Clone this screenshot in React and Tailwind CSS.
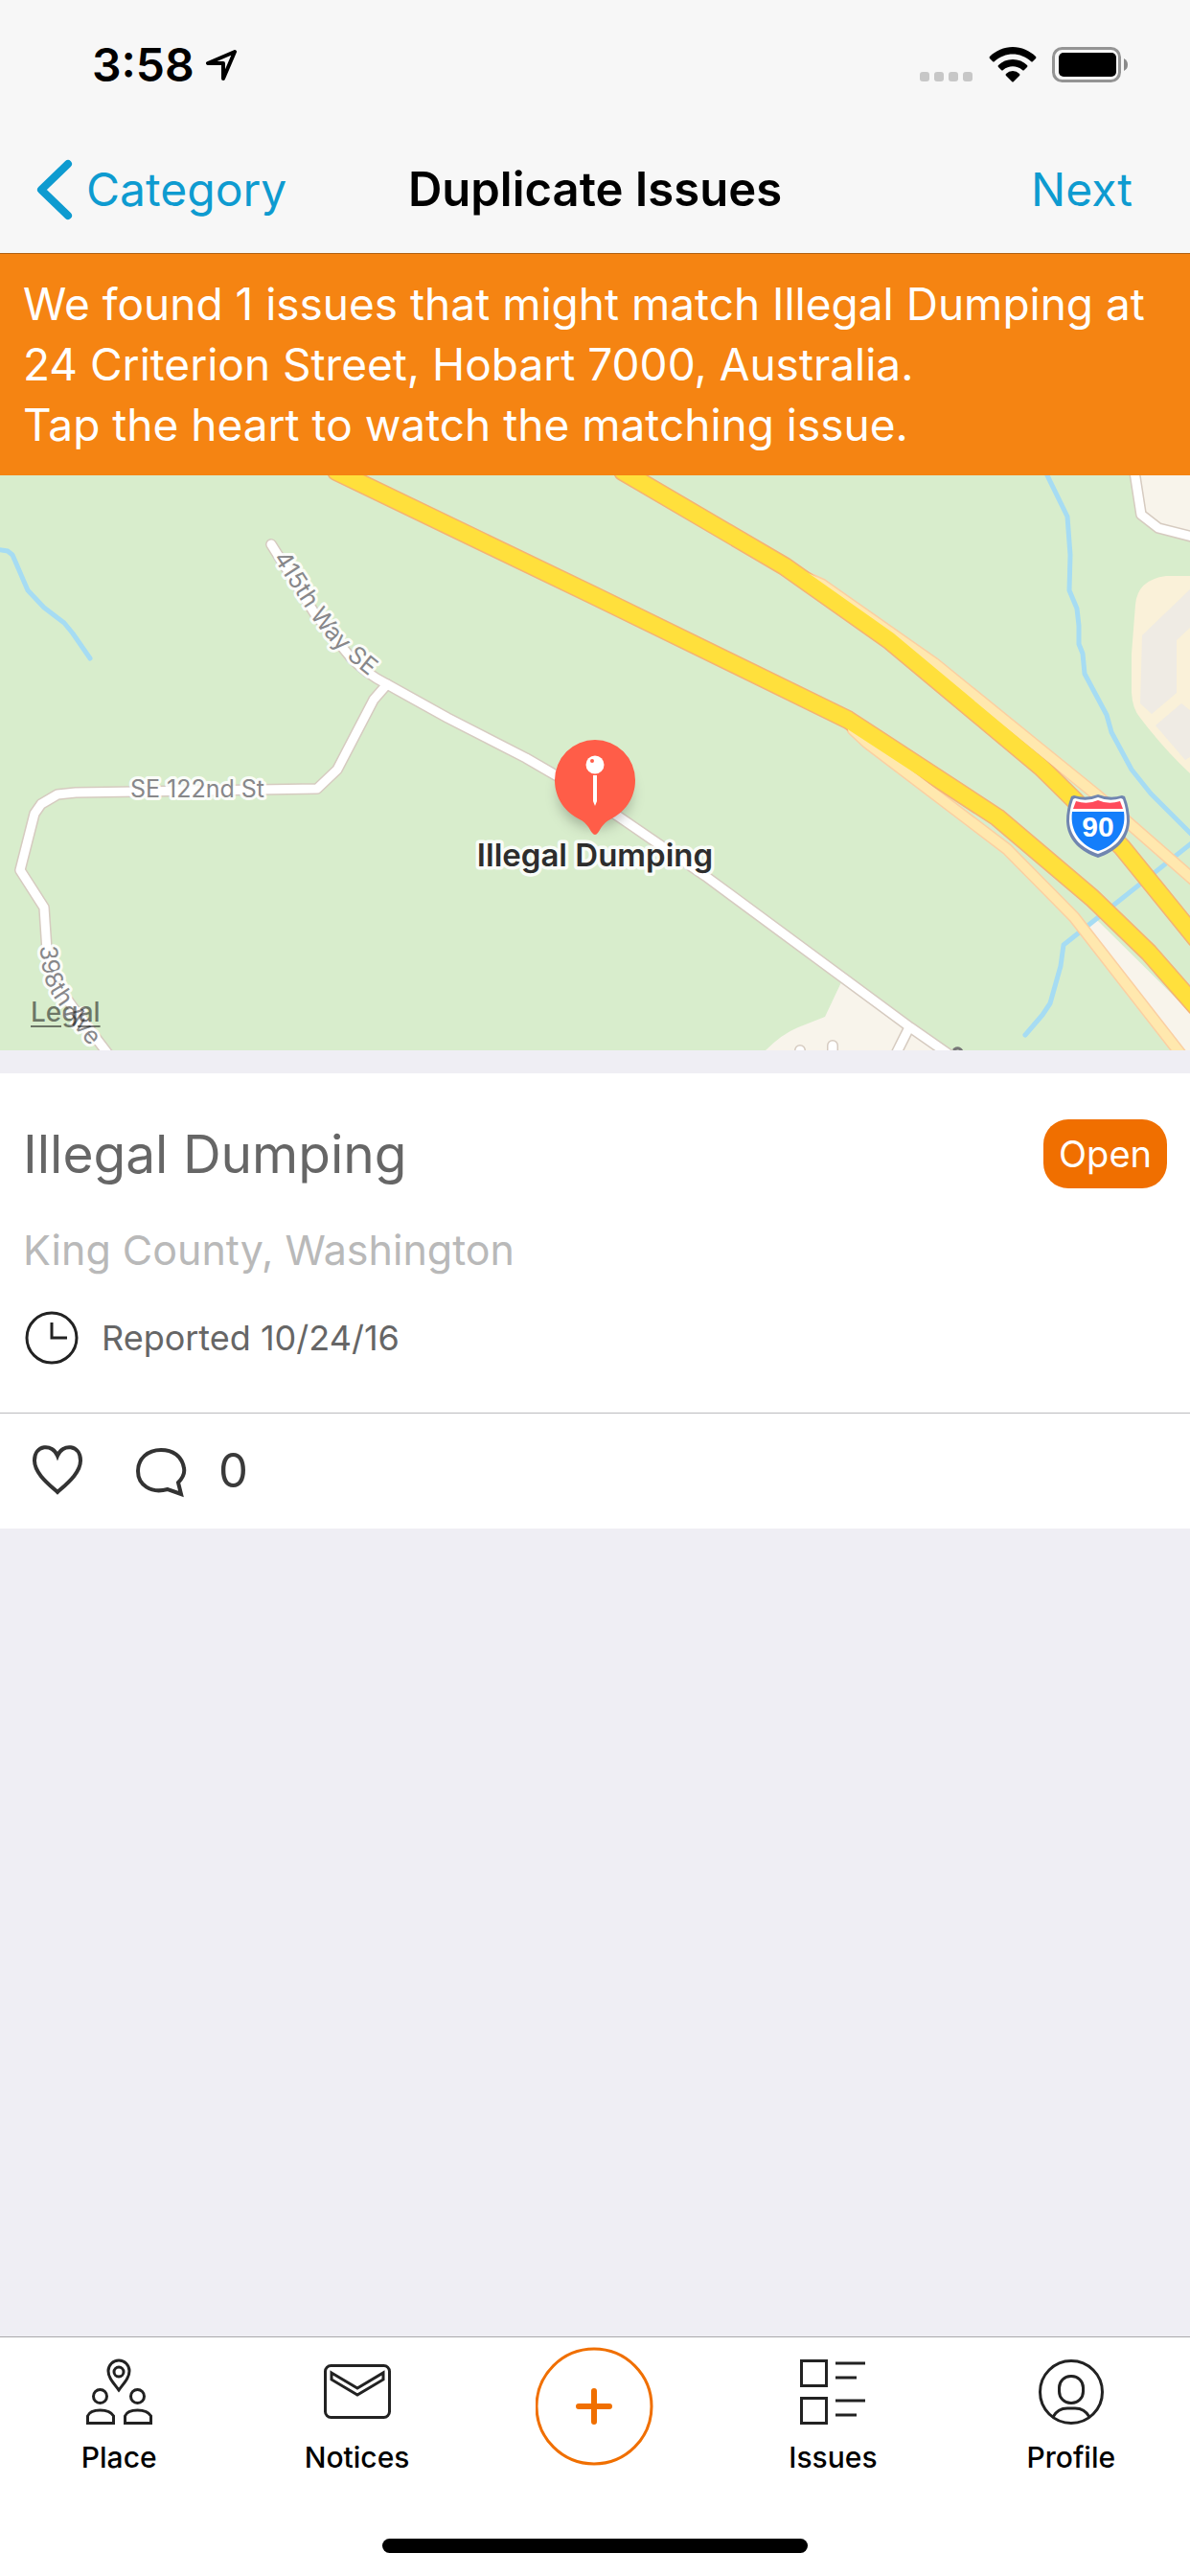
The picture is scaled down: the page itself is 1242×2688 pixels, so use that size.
// src/pages/issues/DuplicateIssues.jsx

const TABS = [
  { label: "Place", icon: PlaceIcon },
  { label: "Notices", icon: NoticesIcon },
  { label: "New issue", icon: null },
  { label: "Issues", icon: IssuesIcon },
  { label: "Profile", icon: ProfileIcon },
];

const ROADS = [
  "M283 72 L329 145 L366 190 Q382 207 404 218 L467 253 L549 295 L580 313 L647 357 L736 418 L950 576 L993 606",
  "M404 218 L390 234 L352 307 L331 327 L79 331 L60 333 L43 343 L36 353 L21 412 L46 451 L49 496 L63 537 L87 570 L113 604",
  "M948 578 L934 606",
  "M1184 -4 L1191 41 L1209 55 L1248 65",
  "M835 600 V610",
  "M869 595 V610",
];

const STREAMS = [
  "M-4 77 L8 79 L13 83 L29 120 L46 138 L67 154 L76 165 L94 191",
  "M1091 -4 L1114 43 L1117 83 L1116 120 L1124 139 L1126 157 L1126 176 L1130 186 L1132 207 L1155 250 L1160 268 L1181 307 L1201 332 L1246 377",
  "M1246 382 L1110 490 L1107 512 L1096 551 L1088 563 L1070 584",
];

const RAMPS = [
  "M838 105 L858 114 L975 196 L1144 333 L1248 424",
  "M890 265 L905 279 L1051 390 L1121 461 L1234 606",
];

const HIGHWAYS = [
  "M351 -4 L621 126 L885 255 L1041 357 L1140 441 L1199 498 L1248 554",
  "M650 -4 L819 95 L928 172 L1086 304 L1171 388 L1248 483",
];

function StatusBar() {
  return (
    <div className="flex items-start justify-between pt-9 pr-16 pl-24">
      <div className="flex items-center gap-3">
        <span className="text-5xl leading-16 font-semibold">3:58</span>
        <svg className="h-8 w-8" viewBox="0 0 32 32" fill="none" stroke="black" strokeWidth="4" strokeLinejoin="round">
          <path d="M30 2 L2 14 H18 V30 Z" />
        </svg>
      </div>
      <div className="flex pt-3">
        <svg className="mr-4 h-10 w-14" viewBox="0 0 56 40" fill="#c7c7c7">
          {[0, 15, 30, 45].map((x) => (
            <rect key={x} x={x} y="27" width="10" height="10" rx="3" />
          ))}
        </svg>
        <svg className="mr-4 h-10 w-[50px]" viewBox="0 0 50 40">
          <path d="M25 1 C34 1 43 5 49 11 Q50 12 49 13 L46 16 Q45 17 44 16 C33 6 17 6 6 16 Q5 17 4 16 L1 13 Q0 12 1 11 C7 5 16 1 25 1 Z" />
          <path d="M25 14 C31 14 36 16 40 20 Q41 21 40 22 L37 25 Q36 26 35 25 C29 20 21 20 15 25 Q14 26 13 25 L10 22 Q9 21 10 20 C14 16 19 14 25 14 Z" />
          <path d="M25 26 Q29 26 32 29 Q33 30 32 31 L26 37 Q25 38 24 37 L18 31 Q17 30 18 29 Q21 26 25 26 Z" />
        </svg>
        <svg className="h-10 w-20" viewBox="0 0 80 40">
          <rect x="1.5" y="2.5" width="69" height="34" rx="9" fill="none" stroke="#949494" strokeWidth="3" />
          <rect x="7" y="7" width="60" height="25" rx="5" />
          <path d="M75 13 Q79 15 79 19.500 T75 26 Z" fill="#8a8a8a" />
        </svg>
      </div>
    </div>
  );
}

function Header() {
  return (
    <header className="border-b border-[#b06012] bg-[#f7f7f7]">
      <StatusBar />
      <div className="grid grid-cols-[1fr_auto_1fr] items-center px-9 pt-[66px] pb-[34px]">
        <button className="flex items-center gap-3.5 text-[#0e9bd0]">
          <svg className="h-16 w-10" viewBox="0 0 40 64" fill="none" stroke="currentColor" strokeWidth="8" strokeLinecap="round" strokeLinejoin="round">
            <path d="M35 5 L7 32 L35 59" />
          </svg>
          <span className="text-5xl leading-16">Category</span>
        </button>
        <h1 className="text-[49px] leading-16 font-semibold">Duplicate Issues</h1>
        <button className="justify-self-end pr-6 text-5xl leading-16 text-[#0e9bd0]">Next</button>
      </div>
    </header>
  );
}

function RoadLabels() {
  return (
    <g fontSize="25" fill="#87878a" stroke="white" strokeOpacity="0.9" strokeWidth="6" strokeLinejoin="round" paintOrder="stroke">
      <path id="way-415" d="M285 86 L327 151 Q353 188 406 225" fill="none" stroke="none" />
      <path id="ave-398" d="M42 491 Q43 526 55 543 L76 574 L116 622" fill="none" stroke="none" />
      <text>
        <textPath href="#way-415">415th Way SE</textPath>
      </text>
      <text x="206" y="336" textAnchor="middle">SE 122nd St</text>
      <text>
        <textPath href="#ave-398">398th Ave</textPath>
      </text>
    </g>
  );
}

function InterstateShield() {
  return (
    <g>
      <path
        d="M1121 334 Q1133 338 1146 333 Q1159 338 1171 334 L1174 335 Q1179 348 1179 361 C1178 381 1164 393 1146 399 C1128 393 1114 381 1113 361 Q1113 348 1118 335 Z"
        fill="#7086b0"
      />
      <path
        d="M1122 337 Q1134 341 1146 336 Q1158 341 1170 337 L1172 338 Q1176 349 1176 361 C1175 379 1161 390 1146 395 C1131 390 1117 379 1116 361 Q1116 349 1120 338 Z"
        fill="white"
      />
      <path d="M1123 340 Q1135 344 1146 339 Q1157 344 1169 340 L1172 348 H1120 Z" fill="#ff4b5c" />
      <path d="M1119 351 H1173 C1176 372 1163 387 1146 392 C1129 387 1116 372 1119 351 Z" fill="#147efb" />
      <text x="1146" y="377" textAnchor="middle" fontSize="30" className="font-[Liberation_Sans] font-bold" fill="white">
        90
      </text>
    </g>
  );
}

function IssuePin() {
  return (
    <g>
      <ellipse cx="621" cy="332" rx="38" ry="36" fill="black" fillOpacity="0.25" filter="url(#pin-shadow)" />
      <path
        d="M621 276 A42 42 0 0 1 663 318 C663 338 651 352 637 359 C629 363 627 369 624 373 Q621 377 618 373 C615 369 613 363 605 359 C591 352 579 338 579 318 A42 42 0 0 1 621 276 Z"
        fill="#ff5d48"
      />
      <circle cx="621" cy="302" r="9.500" fill="white" />
      <circle cx="618" cy="298" r="2" fill="#ff5d48" />
      <path d="M619 313 H623 V340 L621 345 L619 340 Z" fill="white" />
      <text
        x="621"
        y="408"
        textAnchor="middle"
        fontSize="33"
        className="font-semibold"
        fill="#2d2d2d"
        stroke="white"
        strokeOpacity="0.85"
        strokeWidth="7"
        strokeLinejoin="round"
        paintOrder="stroke"
      >
        Illegal Dumping
      </text>
    </g>
  );
}

function IssueMap() {
  return (
    <section className="relative" aria-label="Map of matching issues">
      <svg className="block h-[600px] w-full bg-[#d8edcc]" viewBox="0 0 1242 600" preserveAspectRatio="xMidYMid slice">
        <defs>
          <filter id="pin-shadow" x="-50%" y="-50%" width="200%" height="200%">
            <feGaussianBlur stdDeviation="7" />
          </filter>
        </defs>

        {/* Built-up areas */}
        <path d="M799 600 Q816 583 833 576 L861 565 L878 529 L993 604 Z" fill="#f8f4eb" />
        <path d="M1184 0 L1191 41 L1209 55 L1242 63 V0 Z" fill="#f8f4eb" />
        <path d="M1144 463 L1242 560 V600 H1229 L1132 472 Z" fill="#f8f4eb" />
        <path d="M1242 105 H1217 Q1187 109 1185 135 L1181 186 V227 Q1182 244 1190 253 Q1215 286 1242 311 Z" fill="#faf1d9" />
        <path d="M1242 119 L1192 167 L1190 238 L1202 249 L1228 227 V172 L1242 159 Z" fill="#efebe4" />
        <path d="M1233 238 L1206 261 L1237 297 L1242 294 V245 Z" fill="#efebe4" />

        {/* Highway casings go below the ramps so that merging lanes have no line between them */}
        <g fill="none" strokeLinejoin="round" strokeLinecap="round">
          {STREAMS.map((d) => <path key={d} d={d} stroke="#a6dcf3" strokeWidth="5" />)}
          {ROADS.map((d) => <path key={d} d={d} stroke="#d6cbc0" strokeWidth="12" />)}
          {ROADS.map((d) => <path key={d} d={d} stroke="white" strokeWidth="9" />)}
          {RAMPS.map((d) => <path key={d} d={d} stroke="#fbcfa2" strokeWidth="13" />)}
          {HIGHWAYS.map((d) => <path key={d} d={d} stroke="#f5b273" strokeWidth="20" />)}
          {RAMPS.map((d) => <path key={d} d={d} stroke="#ffe8ae" strokeWidth="10" />)}
          {HIGHWAYS.map((d) => <path key={d} d={d} stroke="#ffe03c" strokeWidth="17" />)}
          <path d="M996 599 Q1001 596 1004 601" stroke="#777" strokeWidth="3" />
        </g>

        <RoadLabels />
        <InterstateShield />
        <IssuePin />
      </svg>
      <a href="#legal" className="absolute bottom-6 left-8 text-[28px] leading-8 font-medium text-black/50 underline underline-offset-4">
        Legal
      </a>
    </section>
  );
}

function IssueCard() {
  return (
    <article className="mt-6 bg-white">
      <div className="border-b border-[#bcbcbe] px-6 pt-12 pb-[50px]">
        <div className="flex items-center justify-between">
          <h2 className="text-[55px] leading-[72px] text-[#666]">Illegal Dumping</h2>
          <span className="rounded-[26px] bg-[#f06f00] px-4 text-[38px] leading-[72px] text-white">Open</span>
        </div>
        <p className="mt-9 text-[43px] leading-14 text-[#b9b9b9]">King County, Washington</p>
        <div className="mt-9 flex items-center gap-6 pl-0.5">
          <svg className="h-14 w-14" viewBox="0 0 56 56" fill="none" stroke="#222" strokeWidth="3">
            <circle cx="28" cy="28" r="26" />
            <path d="M28 12 V28 H44" />
          </svg>
          <span className="text-[36px] leading-14 text-[#666]">Reported 10/24/16</span>
        </div>
      </div>
      <div className="flex h-30 items-center px-8">
        <button aria-label="Watch issue">
          <svg className="h-14 w-14" viewBox="0 0 56 56" fill="none" stroke="#333" strokeWidth="4">
            <path d="M28 12 C23 -1 4 0 4 17 C4 30 18 41 28 50 C38 41 52 30 52 17 C52 0 33 -1 28 12 Z" />
          </svg>
        </button>
        <button className="ml-[52px] flex items-center gap-8 text-[#3a3a3a]" aria-label="Comments: 0">
          <svg className="h-14 w-14" viewBox="0 0 56 56" fill="none" stroke="#333" strokeWidth="4">
            <path d="M46 40 C51 35 53 30 52 25 C50 12 40 6 28 6 C14 6 4 15 4 28 C4 42 17 52 35 47 L49 52 Z" />
          </svg>
          <span className="text-[49px] leading-16">0</span>
        </button>
      </div>
    </article>
  );
}

function PlaceIcon() {
  return (
    <svg className="h-18 w-18" viewBox="0 0 72 72" fill="none" stroke="#222" strokeWidth="3">
      <path d="M36 34 C30 26 25 21 25 14 A11 11 0 0 1 47 14 C47 21 42 26 36 34 Z" />
      <circle cx="36" cy="15" r="5" />
      <circle cx="16.500" cy="40.500" r="7" />
      <circle cx="55.500" cy="40.500" r="7" />
      <path d="M3.500 68.500 V61 Q6 55 16.500 55 T30.500 61 V68.500 Z" />
      <path d="M42.500 68.500 V61 Q45 55 55.500 55 T69.500 61 V68.500 Z" />
    </svg>
  );
}

function NoticesIcon() {
  return (
    <svg className="h-18 w-18" viewBox="0 0 72 72" fill="none" stroke="#222" strokeWidth="3">
      <rect x="2.500" y="8.500" width="67" height="54" rx="6" />
      <path d="M9 16 L36 32 L63 16 V23 L36 39 L9 23 Z" />
    </svg>
  );
}

function IssuesIcon() {
  return (
    <svg className="h-18 w-18" viewBox="0 0 72 72" fill="none" stroke="#222" strokeWidth="3">
      <rect x="3.500" y="3.500" width="26" height="26" />
      <rect x="3.500" y="42.500" width="26" height="26" />
      <path d="M39 6 H70 M39 21 H61 M39 45 H70 M39 60 H61" />
    </svg>
  );
}

function ProfileIcon() {
  return (
    <svg className="h-18 w-18" viewBox="0 0 72 72" fill="none" stroke="#222" strokeWidth="3">
      <circle cx="36" cy="36" r="32.500" />
      <rect x="23.500" y="19.500" width="25" height="28" rx="12" />
      <path d="M17 62 Q22 53 32 53 H40 Q50 53 55 62" />
    </svg>
  );
}

function TabBar() {
  return (
    <nav className="border-t border-[#a9a9ab] bg-white">
      <ul className="grid h-[210px] grid-cols-5">
        {TABS.map(({ label, icon: Icon }) => (
          <li key={label} className="flex justify-center">
            {Icon ? (
              <a href={`#${label.toLowerCase()}`} className="flex flex-col items-center gap-3 pt-[21px]">
                <Icon />
                <span className="text-[30px] leading-10 font-medium">{label}</span>
              </a>
            ) : (
              <button aria-label={label} className="flex items-start pt-2.5">
                <svg className="h-31 w-31" viewBox="0 0 124 124" fill="none" stroke="#f06f00">
                  <circle cx="61" cy="62" r="60" strokeWidth="3" />
                  <path d="M61 46 V78 M45 62 H77" strokeWidth="6" strokeLinecap="round" />
                </svg>
              </button>
            )}
          </li>
        ))}
      </ul>
      <div className="mx-auto mb-6 h-[15px] w-[444px] rounded-full bg-black" />
    </nav>
  );
}

export default function App() {
  return (
    <div className="flex min-h-screen flex-col bg-[#efeef4] font-[Inter,sans-serif] text-black">
      <Header />
      <main className="flex-1">
        <div className="bg-[#f58412] px-6 py-[21px] text-[46px] leading-[63px] text-white">
          <p>
            We found 1 issues that might match Illegal Dumping at
            <br />
            24 Criterion Street, Hobart 7000, Australia.
          </p>
          <p>Tap the heart to watch the matching issue.</p>
        </div>
        <IssueMap />
        <IssueCard />
      </main>
      <TabBar />
    </div>
  );
}
